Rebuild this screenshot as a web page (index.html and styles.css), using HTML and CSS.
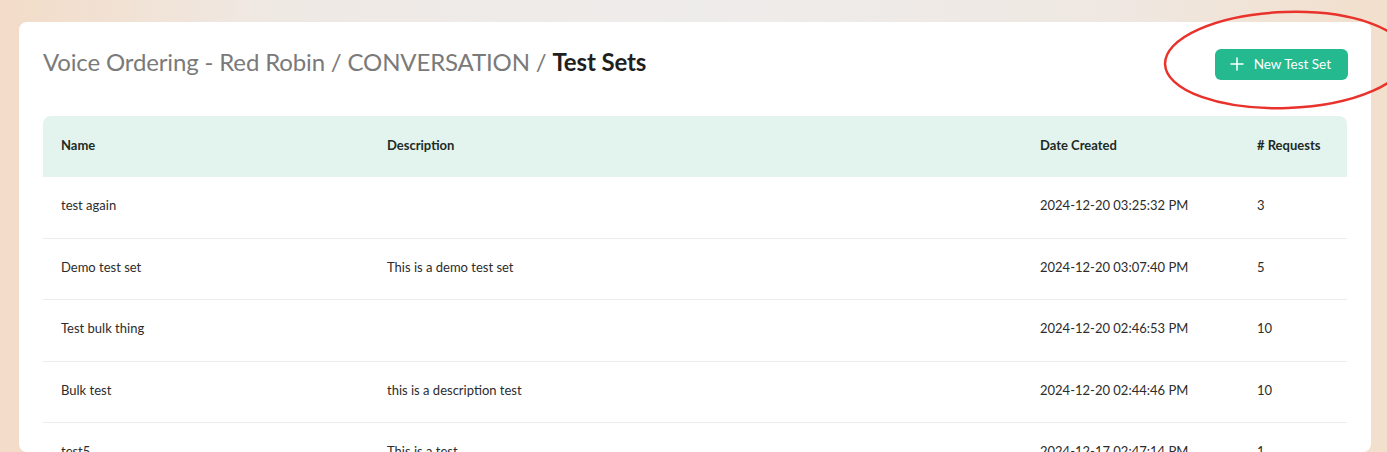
FILE: index.html
```html
<!DOCTYPE html>
<html>
<head>
<meta charset="utf-8">
<link rel="stylesheet" href="styles.css">
</head>
<body>
<div class="page">
  <div class="card">
    <div class="head">
      <h1 class="title"><span class="crumb">Voice Ordering - Red Robin / CONVERSATION / </span><span class="current">Test Sets</span></h1>
      <button class="btn"><svg width="14" height="14" viewBox="0 0 14 14"><path d="M7 1v12M1 7h12" stroke="#fff" stroke-width="1.5" stroke-linecap="round"/></svg><span>New Test Set</span></button>
    </div>
    <div class="table">
      <div class="row header">
        <div>Name</div><div>Description</div><div>Date Created</div><div># Requests</div>
      </div>
      <div class="row"><div>test again</div><div></div><div>2024-12-20 03:25:32 PM</div><div>3</div></div>
      <div class="row"><div>Demo test set</div><div>This is a demo test set</div><div>2024-12-20 03:07:40 PM</div><div>5</div></div>
      <div class="row"><div>Test bulk thing</div><div></div><div>2024-12-20 02:46:53 PM</div><div>10</div></div>
      <div class="row"><div>Bulk test</div><div>this is a description test</div><div>2024-12-20 02:44:46 PM</div><div>10</div></div>
      <div class="row"><div>test5</div><div>This is a test</div><div>2024-12-17 02:47:14 PM</div><div>1</div></div>
    </div>
  </div>
  <svg class="circle" width="260" height="112" viewBox="0 0 260 112"><ellipse cx="134" cy="52" rx="121" ry="48" fill="none" stroke="#e8322b" stroke-width="2.5" transform="rotate(-2 134 52)"/></svg>
</div>
</body>
</html>
```
FILE: styles.css
```css
html, body { margin: 0; padding: 0; }
body {
  width: 1387px; height: 452px; overflow: hidden;
  font-family: Lato, "Open Sans", sans-serif;
  background: linear-gradient(90deg, #f3dcc8 0%, #efe9e4 20%, #eeeceb 50%, #efe8e2 80%, #f2dfcc 100%);
}
.page { position: relative; padding: 22px 16px 0 19px; height: 452px; box-sizing: border-box; overflow: hidden; }
.card {
  background: #fff; border-radius: 8px; padding: 26px 24px 0 24px; height: 100%;
  box-sizing: border-box; overflow: hidden;
}
.head { display: flex; justify-content: space-between; align-items: center; height: 32px; margin-bottom: 36px; }
.title { margin: 0 0 5px; font-size: 24px; font-weight: 400; color: #7a7a7a; letter-spacing: -0.15px; }
.title .current { color: #1f1f1f; font-weight: 700; }
.btn {
  display: flex; align-items: center; gap: 10px; border: 0; background: #25b98f; color: #fff;
  border-radius: 6px; height: 31px; padding: 0 17px 0 15px; font-family: inherit; font-size: 13.5px;
  margin-right: -1px;
}
.table { font-size: 13px; color: #2c2c2c; }
.row { display: grid; grid-template-columns: 326px 653px 217px 1fr; height: 61.5px; box-sizing: border-box; align-items: center; border-bottom: 1px solid #ececec; padding: 0 0 4px 18px; }
.row.header { background: #e3f4ef; border-radius: 8px 8px 0 0; border-bottom: 0; font-weight: 700; color: #1e2a26; height: 61px; }
.circle { position: absolute; left: 1152px; top: 8px; }
```
